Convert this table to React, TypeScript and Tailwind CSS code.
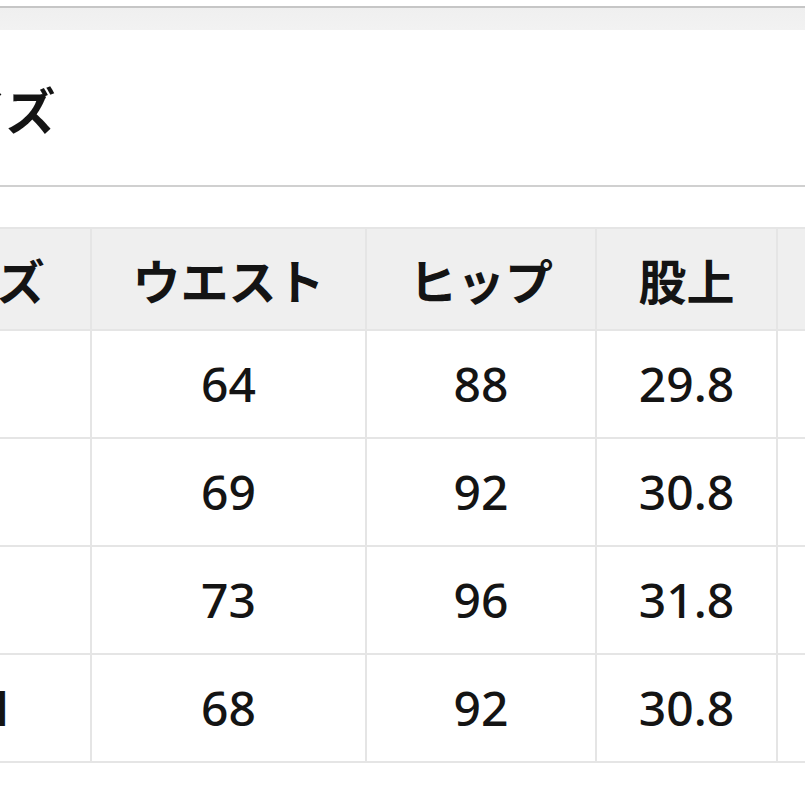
const HEAD = ["サイズ", "ウエスト", "ヒップ", "股上", "股下"];

const ROWS = [
  ["S", "64", "88", "29.8", "74"],
  ["M", "69", "92", "30.8", "76"],
  ["L", "73", "96", "31.8", "78"],
  ["SM", "68", "92", "30.8", "74"],
];

const font = { fontFamily: '"Noto Sans", "Noto Sans CJK JP", sans-serif' };

export default function App() {
  return (
    <div className="w-[805px] h-[805px] overflow-hidden bg-white text-[#141414]" style={font}>
      <div className="h-[6px] bg-white" />
      <div className="h-[2px] bg-[#c6c6c6]" />
      <div className="h-[22px] bg-gradient-to-b from-[#efefef] to-[#f2f2f2]" />

      <div className="h-[155px] flex items-center">
        <h2
          className="ml-[-93px] text-[50px] leading-none font-bold whitespace-nowrap"
          style={{ fontFamily: '"Noto Sans CJK JP", sans-serif' }}
        >
          サイズ
        </h2>
      </div>
      <div className="h-[2px] bg-[#d0d0d0]" />

      <div className="h-[40px]" />

      <div className="ml-[-145px] w-[1150px] grid grid-cols-[233px_273px_228px_179px_200px] grid-rows-[100px_106px_106px_106px_106px] gap-[2px] p-[2px] bg-[#e5e5e5]">
        {HEAD.map((h) => (
          <div
            key={h}
            className="bg-[#efefef] flex items-center justify-center text-[48px] font-bold leading-none"
            style={{ fontFamily: '"Noto Sans CJK JP", sans-serif' }}
          >
            {h}
          </div>
        ))}
        {ROWS.map((row, r) =>
          row.map((cell, c) => (
            <div
              key={`${r}-${c}`}
              className={`bg-white flex items-center justify-center text-[48px] leading-none ${
                c === 0 ? "font-bold" : "font-medium"
              }`}
            >
              {cell}
            </div>
          ))
        )}
      </div>
    </div>
  );
}
